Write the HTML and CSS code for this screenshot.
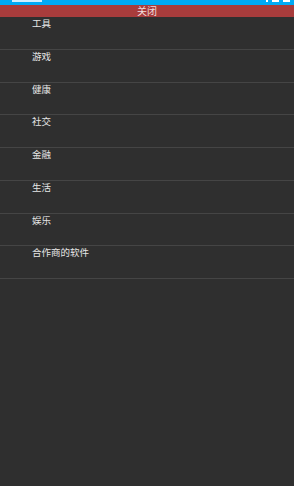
FILE: index.html
```html
<!DOCTYPE html>
<html lang="zh">

<head>
  <meta charset="UTF-8">
  <meta name="viewport" content="width=device-width, initial-scale=1.0">
  <title>分类</title>
  <link rel="stylesheet" href="styles.css">
</head>

<body>

  <!-- Status bar (cut off at top) -->
  <div class="status-bar">
    <span class="status-left"></span>
    <span class="status-icons">
      <i class="dot"></i><i class="box"></i><i class="box"></i>
    </span>
  </div>

  <!-- Close bar -->
  <div class="close-bar">关闭</div>

  <!-- Category list -->
  <ul class="category-list">
    <li>工具</li>
    <li>游戏</li>
    <li>健康</li>
    <li>社交</li>
    <li>金融</li>
    <li>生活</li>
    <li>娱乐</li>
    <li>合作商的软件</li>
  </ul>

</body>

</html>
```

FILE: styles.css
```css
html,
body {
  margin: 0;
  padding: 0;
  height: 100%;
}

body {
  background: #2f2f2f;
  font-family: "Noto Sans CJK SC", "Noto Sans", sans-serif;
  color: #e6e6e6;
  overflow: hidden;
}

/* Status Bar */
.status-bar {
  height: 5px;
  background: #00aaf5;
  display: flex;
  justify-content: space-between;
  align-items: flex-start;
  padding: 0 4px 0 12px;
  overflow: hidden;
}

.status-left {
  width: 30px;
  height: 2px;
  background: #cfefff;
}

.status-icons {
  display: flex;
  gap: 4px;
}

.status-icons i {
  display: block;
  background: #ffffff;
}

.status-icons .dot {
  width: 2px;
  height: 2px;
}

.status-icons .box {
  width: 7px;
  height: 2px;
}

/* Close Bar */
.close-bar {
  height: 12px;
  line-height: 12px;
  background: #a83c3c;
  color: #f0dede;
  text-align: center;
  font-size: 10px;
}

/* Category List */
.category-list {
  list-style: none;
  margin: 0;
  padding: 0;
}

.category-list li {
  height: 31.75px;
  border-bottom: 1px solid #454545;
  padding-left: 32px;
  font-size: 9.5px;
  line-height: 13px;
  box-sizing: content-box;
}
```
